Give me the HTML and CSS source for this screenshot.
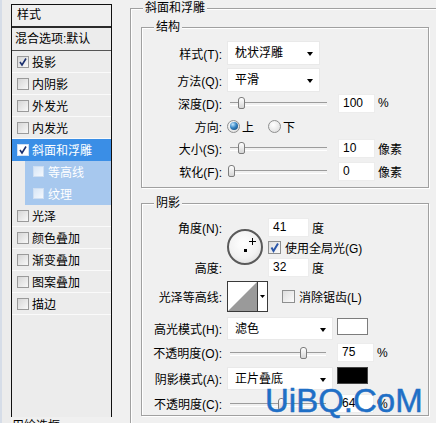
FILE: index.html
```html
<!DOCTYPE html>
<html>
<head>
<meta charset="utf-8">
<link rel="stylesheet" href="styles.css">
</head>
<body>
<div class="dialog">
  <div class="strip"></div>
  <div class="sidebar">
    <div class="panel">
      <div class="ph">样式</div>
      <div class="pb">混合选项:默认</div>
      <ul class="list">
        <li><span class="cb on"><svg viewBox="0 0 10 10" width="10" height="10"><path d="M2 5 L4 8 L8 1.5" fill="none" stroke="#1a2f6e" stroke-width="1.6"/></svg></span>投影</li>
        <li><span class="cb"></span>内阴影</li>
        <li><span class="cb"></span>外发光</li>
        <li><span class="cb"></span>内发光</li>
        <li class="sel"><span class="cb on white"><svg viewBox="0 0 10 10" width="10" height="10"><path d="M2 5 L4 8 L8 1.5" fill="none" stroke="#1a2f6e" stroke-width="1.6"/></svg></span>斜面和浮雕</li>
        <li class="sub"><span class="cb"></span>等高线</li>
        <li class="sub"><span class="cb"></span>纹理</li>
        <li><span class="cb"></span>光泽</li>
        <li><span class="cb"></span>颜色叠加</li>
        <li><span class="cb"></span>渐变叠加</li>
        <li><span class="cb"></span>图案叠加</li>
        <li><span class="cb"></span>描边</li>
      </ul>
    </div>
    <div class="foot">用绘选框</div>
  </div>
  <div class="main">
    <div class="outer">
      <span class="legend">斜面和浮雕</span>
      <div class="group g1">
        <span class="legend">结构</span>
        <div class="row r1"><span class="lb">样式(T):</span><div class="sel-box w93">枕状浮雕</div></div>
        <div class="row r2"><span class="lb">方法(Q):</span><div class="sel-box w93">平滑</div></div>
        <div class="row r3"><span class="lb">深度(D):</span><div class="slider"><i class="thumb" style="left:11px"></i></div><div class="inp">100</div><span class="unit">%</span></div>
        <div class="row r4"><span class="lb">方向:</span><span class="radio on"></span><span class="rt gap-r">上</span><span class="radio"></span><span class="rt">下</span></div>
        <div class="row r5"><span class="lb">大小(S):</span><div class="slider"><i class="thumb" style="left:11px"></i></div><div class="inp">10</div><span class="unit">像素</span></div>
        <div class="row r6"><span class="lb">软化(F):</span><div class="slider"><i class="thumb" style="left:1px"></i></div><div class="inp">0</div><span class="unit">像素</span></div>
      </div>
      <div class="group g2">
        <span class="legend">阴影</span>
        <div class="angle">
          <span class="lb a-l1">角度(N):</span>
          <div class="dial"><i class="dot"></i><svg class="cross" width="7" height="7" viewBox="0 0 7 7"><path d="M3.5 0 V7 M0 3.5 H7" stroke="#000" stroke-width="1"/></svg></div>
          <div class="a-c1"><div class="inp w41">41</div><span class="unit">度</span></div>
          <div class="a-c2"><span class="chk"><svg viewBox="0 0 11 11" width="11" height="11"><path d="M2.5 5.5 L4.5 9 L9 1.5" fill="none" stroke="#2a56a8" stroke-width="2"/></svg></span><span class="rt">使用全局光(G)</span></div>
          <span class="lb a-l3">高度:</span>
          <div class="a-c3"><div class="inp w41">32</div><span class="unit">度</span></div>
        </div>
        <div class="row c1"><span class="lb">光泽等高线:</span>
          <svg class="contour" width="41" height="31" viewBox="0 0 41 31"><rect x="0.5" y="0.5" width="40" height="30" fill="#fff" stroke="#3a3a3a"/><polygon points="1,30 30,1 30,30" fill="#9a9a9a"/><line x1="30.5" y1="0.5" x2="30.5" y2="30.5" stroke="#3a3a3a"/><polygon points="33,14 38,14 35.5,17" fill="#000"/></svg>
          <span class="chk aa"></span><span class="rt">消除锯齿(L)</span></div>
        <div class="row c2"><span class="lb">高光模式(H):</span><div class="sel-box w106">滤色</div><span class="swatch white"></span></div>
        <div class="row c3"><span class="lb">不透明度(O):</span><div class="slider s110"><i class="thumb" style="left:73px"></i></div><div class="inp">75</div><span class="unit">%</span></div>
        <div class="row c4"><span class="lb">阴影模式(A):</span><div class="sel-box w106">正片叠底</div><span class="swatch black"></span></div>
        <div class="row c5"><span class="lb">不透明度(C):</span><div class="slider s110"><i class="thumb" style="left:51px"></i></div><div class="inp">64</div><span class="unit">%</span></div>
      </div>
    </div>
  </div>
</div>
<div class="wm">UiBQ.CoM</div>
</body>
</html>
```
FILE: styles.css
```css
* { box-sizing: border-box; margin: 0; padding: 0; }
html, body { width: 436px; height: 423px; overflow: hidden; }
body {
  background: #f0f0f0;
  font-family: "Liberation Sans", "Noto Sans CJK SC", sans-serif;
  font-size: 12px;
  color: #000;
  position: relative;
}
.dialog { display: flex; height: 423px; }
.strip { width: 11px; flex: none; background: #ececec; border-left: 2px solid #d6dde8; }
.sidebar { width: 101px; flex: none; display: flex; flex-direction: column; }
.panel {
  margin-top: 4px;
  height: 413px;
  flex: none;
  border: 1px solid #111;
  border-bottom: none;
  background: #ececec;
}
.ph { height: 23px; line-height: 21px; padding-left: 5px; border-bottom: 2px solid #2a2a2a; background: #efefef; }
.pb { height: 23px; line-height: 22px; padding-left: 3px; border-bottom: 1px solid #555; }
.list { list-style: none; }
.list li {
  height: 22px;
  border-bottom: 1px solid #fafafa;
  display: flex;
  align-items: center;
  padding-left: 5px;
  gap: 3px;
}
.list li.sel { background: #3a8ee6; color: #fff; border-bottom-color: #3a8ee6; }
.list li.sub { margin-left: 13px; padding-left: 8px; gap: 4px; background: #a7c8ee; color: #fff; border-bottom-color: #a7c8ee; }
.cb {
  width: 12px; height: 12px; flex: none;
  border: 1px solid #9a9a9a;
  background: linear-gradient(135deg, #d6d6d6, #f8f8f8);
  display: flex; align-items: center; justify-content: center;
}
.cb.white { background: #fff; border-color: #d0e0f4; }
.sub .cb { width: 11px; height: 11px; border-color: #cfdff2; background: linear-gradient(135deg, #d8e6f6, #f4f8fd); }
.foot { line-height: 14px; padding-left: 1px; margin-top: 2px; flex: none; }

.main { flex: 1; }
.outer {
  margin: 8px 0 0 18px;
  height: 430px;
  border-top: 1px solid #a0a0a0;
  border-left: 1px solid #a0a0a0;
  box-shadow: inset 1px 1px 0 #fff;
  position: relative;
}
.legend {
  position: absolute;
  top: -9px;
  left: 12px;
  background: #f0f0f0;
  padding: 0 2px;
  line-height: 16px;
}
.group {
  position: relative;
  margin-left: 10px;
  width: 288px;
  border: 1px solid #a0a0a0;
  box-shadow: 1px 1px 0 #fff, inset 1px 1px 0 #fff;
}
.g1 { margin-top: 18px; height: 161px; }
.g2 { margin-top: 15px; height: 213px; }

.row { display: flex; align-items: center; }
.lb { width: 80px; flex: none; text-align: right; margin-right: 5px; white-space: nowrap; }
.r1 { height: 24px; margin-top: 13px; }
.r2 { height: 24px; margin-top: 3px; }
.r3 { height: 20px; margin-top: 1px; }
.r4 { height: 20px; margin-top: 3px; }
.r5 { height: 20px; margin-top: 2px; }
.r6 { height: 20px; margin-top: 3px; }

.sel-box {
  height: 24px;
  background: #fff;
  border: 1px solid #e9e9e9;
  padding-left: 7px;
  line-height: 22px;
  position: relative;
  flex: none;
}
.sel-box::after {
  content: "";
  position: absolute;
  right: 6px;
  top: 10px;
  border-left: 3.5px solid transparent;
  border-right: 3.5px solid transparent;
  border-top: 4px solid #000;
}
.w93 { width: 93px; }
.w106 { width: 106px; height: 23px; }

.slider { width: 111px; height: 20px; position: relative; flex: none; }
.slider.s110 { width: 110px; }
.slider::before {
  content: "";
  position: absolute;
  left: 3px;
  right: 11px;
  top: 9px;
  height: 2px;
  border-top: 1px solid #9c9c9c;
  border-bottom: 1px solid #fff;
}
.thumb {
  position: absolute;
  top: 4px;
  width: 7px;
  height: 12px;
  border: 1px solid #7d7d7d;
  border-radius: 3px 3px 2px 2px;
  background: linear-gradient(#ffffff, #d6d6d6);
}
.inp {
  width: 37px;
  height: 19px;
  flex: none;
  background: #fff;
  border: 1px solid #ececec;
  padding-left: 4px;
  line-height: 17px;
}
.inp.w41 { width: 41px; }
.unit { margin-left: 3px; }

.radio {
  width: 13px; height: 13px; flex: none;
  border-radius: 50%;
  border: 1px solid #8e8f8f;
  background: radial-gradient(circle at 40% 35%, #ffffff, #d9d9d9);
  display: flex; align-items: center; justify-content: center;
}
.radio.on::after {
  content: "";
  width: 8px; height: 8px;
  border-radius: 50%;
  background: radial-gradient(circle at 35% 30%, #c4e8ff 0, #3585c4 45%, #0c3c6a 100%);
}
.rt { margin-left: 2px; }
.rt.gap-r { margin-right: 14px; }

.angle {
  display: grid;
  grid-template-columns: 80px 36px 1fr;
  grid-template-rows: 19px 21px 19px;
  column-gap: 5px;
  margin-top: 14px;
  align-items: center;
}
.angle .lb { width: auto; margin-right: 0; }
.a-l1 { grid-column: 1; grid-row: 1; }
.a-l3 { grid-column: 1; grid-row: 3; }
.dial {
  grid-column: 2; grid-row: 1 / 4;
  align-self: start;
  margin-top: 11px;
  width: 36px; height: 36px;
  border-radius: 50%;
  border: 2px solid #5a5a5a;
  background: radial-gradient(circle at 45% 40%, #ffffff 0, #f2f2f2 55%, #d4d4d4 100%);
  position: relative;
}
.dot { position: absolute; left: 15px; top: 18px; width: 3px; height: 3px; background: #000; }
.cross { position: absolute; left: 20px; top: 7px; }
.a-c1, .a-c2, .a-c3 { grid-column: 3; display: flex; align-items: center; }
.a-c1 { grid-row: 1; }
.a-c2 { grid-row: 2; }
.a-c3 { grid-row: 3; }
.chk {
  width: 13px; height: 13px; flex: none;
  border: 1px solid #8e8f8f;
  background: linear-gradient(135deg, #dedede, #fbfbfb);
  display: flex; align-items: center; justify-content: center;
}
.a-c2 .rt { margin-left: 4px; }

.c1 { height: 31px; margin-top: 4px; }
.contour { flex: none; display: block; }
.chk.aa { margin-left: 14px; }
.c1 .rt { margin-left: 4px; }
.c2 { height: 23px; margin-top: 5px; }
.c3 { height: 19px; margin-top: 3px; }
.c4 { height: 23px; margin-top: 5px; }
.c5 { height: 19px; margin-top: 4px; }
.swatch { width: 31px; height: 17px; margin-left: 4px; align-self: flex-start; margin-top: 1px; flex: none; }
.swatch.white { background: #fff; border: 1px solid #7c7c7c; }
.swatch.black { background: #000; border: 1px solid #444; margin-top: 0; }

.wm {
  position: absolute;
  left: 265px;
  top: 384px;
  font-family: "Liberation Sans", sans-serif;
  font-size: 33px;
  line-height: 33px;
  color: #1f6fc6;
  -webkit-text-stroke: 0.5px #1f6fc6;
  white-space: nowrap;
}
```
